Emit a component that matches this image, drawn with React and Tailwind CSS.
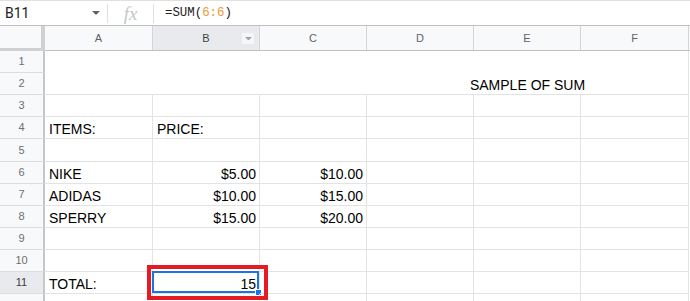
import React from "react";

const COLS = [
  { key: "A", w: "w-[108px]" },
  { key: "B", w: "w-[107px]" },
  { key: "C", w: "w-[107px]" },
  { key: "D", w: "w-[107px]" },
  { key: "E", w: "w-[107px]" },
  { key: "F", w: "w-[108px]" },
];

const ROWS = [
  { n: 3, h: "h-[22px]", cells: {} },
  { n: 4, h: "h-[22px]", cells: { A: "ITEMS:", B: "PRICE:" } },
  { n: 5, h: "h-[23px]", cells: {} },
  { n: 6, h: "h-[22px]", cells: { A: "NIKE", B: "$5.00", C: "$10.00" }, right: ["B", "C"] },
  { n: 7, h: "h-[22px]", cells: { A: "ADIDAS", B: "$10.00", C: "$15.00" }, right: ["B", "C"] },
  { n: 8, h: "h-[22px]", cells: { A: "SPERRY", B: "$15.00", C: "$20.00" }, right: ["B", "C"] },
  { n: 9, h: "h-[22px]", cells: {} },
  { n: 10, h: "h-[22px]", cells: {} },
  { n: 11, h: "h-[22px]", cells: { A: "TOTAL:", B: "15" }, right: ["B"], selected: true },
  { n: 12, h: "h-[22px]", cells: {}, hideLabel: true },
];

function RowHeader({ n, h, active, hideLabel }) {
  return (
    <div
      className={`${h} w-[45px] shrink-0 flex items-center justify-center border-r-2 border-b border-r-[#c4c7c5] border-b-[#dcdcdc] text-[11px] ${
        active ? "bg-[#e8eaed] text-[#3c4043]" : "bg-[#f8f9fa] text-[#6f6f6f]"
      }`}
    >
      {hideLabel ? null : n}
    </div>
  );
}

function Caret({ className }) {
  return (
    <svg viewBox="0 0 8 4" className={className}>
      <path d="M0 0h8L4 4z" fill="currentColor" />
    </svg>
  );
}

export default function App() {
  return (
    <div className="relative w-[690px] h-[301px] overflow-hidden bg-white font-['Liberation_Sans',Arial,sans-serif] text-black">
      {/* formula bar */}
      <div className="flex h-[25px] items-center border-t border-[#e0e0e0]">
        <div className="flex w-[107px] items-center justify-between pl-[5px] pr-[7px] text-[14px] text-[#202124] font-['Roboto',sans-serif]">
          <span>B11</span>
          <Caret className="w-[8px] h-[4px] text-[#5f6368]" />
        </div>
        <div className="h-[19px] w-px bg-[#e0e0e0]" />
        <div className="flex w-[45px] items-center justify-center font-['Liberation_Serif',serif] italic text-[19px] leading-none text-[#c4c7c5]">
          fx
        </div>
        <div className="h-[19px] w-px bg-[#e0e0e0]" />
        <div className="pl-[11px] font-['Liberation_Mono',monospace] text-[12.4px] text-[#202124]">
          =SUM(<span className="text-[#f29534]">6:6</span>)
        </div>
      </div>

      {/* column headers */}
      <div className="flex h-[26px] border-t border-b border-[#c0c0c0] bg-[#f8f9fa] text-[11px] text-[#5f6368]">
        <div className="w-[45px] shrink-0 border-r-4 border-b-[3px] border-[#cfd1d3] -mb-px" />
        {COLS.map((c) => (
          <div
            key={c.key}
            className={`${c.w} shrink-0 relative flex items-center justify-center border-r border-[#d3d5d7] ${
              c.key === "B" ? "bg-[#e8eaed] text-[#3c4043]" : ""
            }`}
          >
            {c.key}
            {c.key === "B" && (
              <div className="absolute right-[5px] top-[7px] flex h-[11px] w-[12px] items-center justify-center bg-[#f5f6f7]">
                <Caret className="w-[7px] h-[3.5px] text-[#a0a4a8]" />
              </div>
            )}
          </div>
        ))}
      </div>

      {/* rows 1-2: merged title range */}
      <div className="flex">
        <div className="flex flex-col">
          <RowHeader n={1} h="h-[22px]" />
          <RowHeader n={2} h="h-[22px]" />
        </div>
        <div className="flex h-[44px] w-[644px] border-r border-b border-[#e2e3e3]">
          {COLS.map((c) => (
            <div key={c.key} className={`${c.w} shrink-0 flex items-end justify-center pb-px text-[14px] leading-[16px]`}>
              {c.key === "E" ? <span className="whitespace-nowrap">SAMPLE OF SUM</span> : null}
            </div>
          ))}
        </div>
      </div>

      {/* data rows */}
      {ROWS.map((r) => (
        <div key={r.n} className="flex">
          <RowHeader n={r.n} h={r.h} active={r.selected} hideLabel={r.hideLabel} />
          {COLS.map((c) => {
            const txt = r.cells[c.key];
            const isRight = r.right && r.right.includes(c.key);
            const sel = r.selected && c.key === "B";
            return (
              <div
                key={c.key}
                className={`${c.w} ${r.h} shrink-0 relative flex items-end border-r border-b border-[#e2e3e3] pb-px text-[14px] leading-[16px] whitespace-nowrap ${
                  isRight ? "justify-end pr-[3px]" : "justify-start pl-[4px]"
                }`}
              >
                {txt}
                {sel && (
                  <>
                    <div className="absolute -left-[1px] -top-[1px] right-0 bottom-0 border-2 border-[#1a73e8]" />
                    <div className="absolute -right-[3px] -bottom-[3px] h-[7px] w-[7px] bg-[#1a73e8] border border-white" />
                  </>
                )}
              </div>
            );
          })}
        </div>
      ))}

      {/* highlight around the total */}
      <div className="absolute left-[147px] top-[265px] h-[35px] w-[121px] border-4 border-[#e41b23]" />
    </div>
  );
}
